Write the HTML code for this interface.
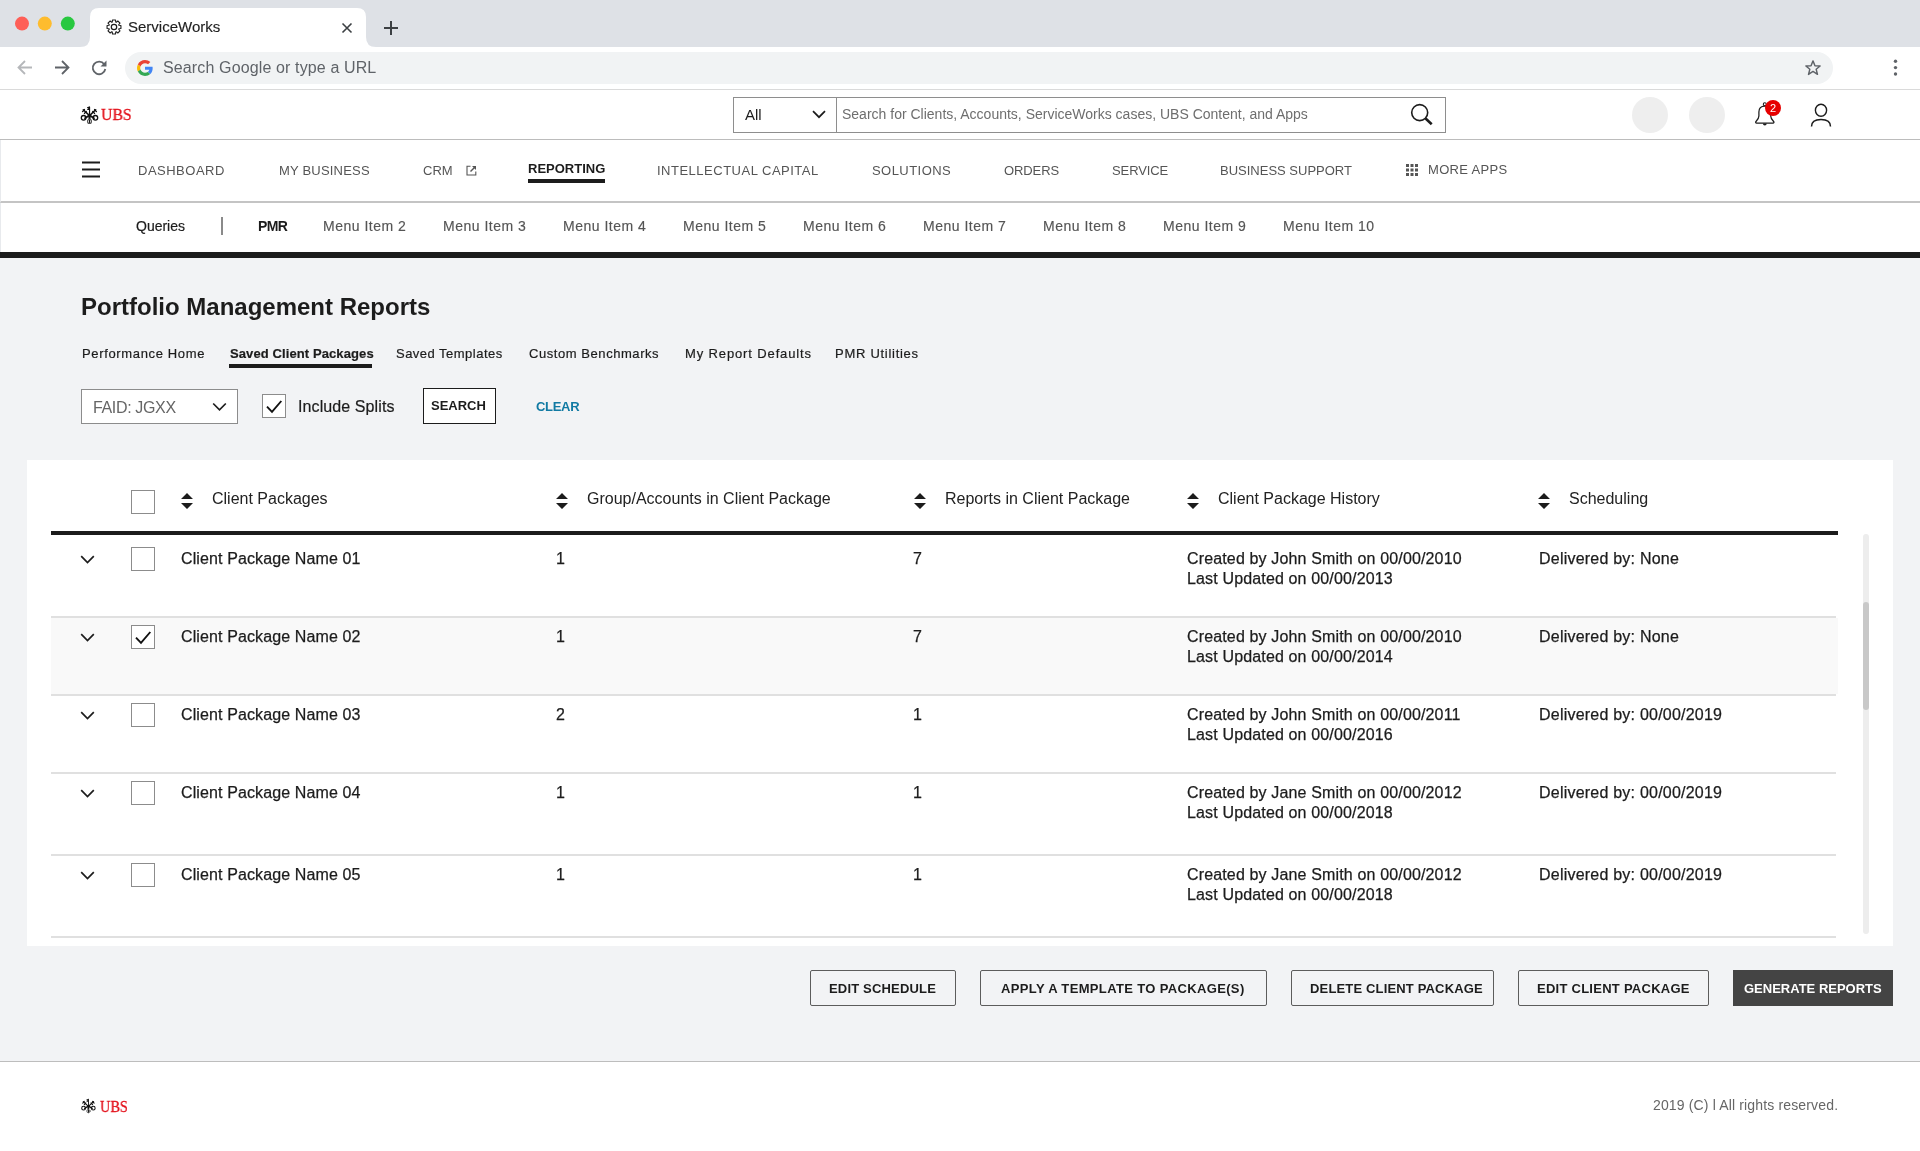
<!DOCTYPE html>
<html><head><meta charset="utf-8">
<style>
*{margin:0;padding:0;box-sizing:border-box}
html,body{width:1920px;height:1151px;overflow:hidden;background:#fff;font-family:"Liberation Sans",sans-serif;color:#1c1c1c;-webkit-font-smoothing:antialiased}
.a{position:absolute;white-space:pre;will-change:transform}
.t13{font-size:13px;line-height:13px}
.t14{font-size:14px;line-height:14px}
.t15{font-size:15px;line-height:15px}
.t16{font-size:16px;line-height:16px}
.b{font-weight:bold}
svg{position:absolute;overflow:visible}
/* chrome */
#tabbar{position:absolute;left:0;top:0;width:1920px;height:47px;background:#dee1e6}
#tab{position:absolute;left:90px;top:8px;width:276px;height:40px;background:#fff;border-radius:9px 9px 0 0}
#addr{position:absolute;left:0;top:47px;width:1920px;height:43px;background:#fff;border-bottom:1px solid #dadada}
#pill{position:absolute;left:125px;top:52px;width:1708px;height:32px;background:#f1f3f4;border-radius:16px}
/* app header */
#apphdr{position:absolute;left:0;top:90px;width:1920px;height:50px;background:#fff;border-bottom:1px solid #bcbcbc}
#nav{position:absolute;left:0;top:140px;width:1920px;height:63px;background:#fff;border-left:1px solid #e8eaed;border-bottom:2px solid #c4c4c4}
#subnav{position:absolute;left:0;top:203px;width:1920px;height:49px;background:#fff;border-left:1px solid #e8eaed}
#blk{position:absolute;left:0;top:252px;width:1920px;height:6px;background:#1c1c1c}
#page{position:absolute;left:0;top:258px;width:1920px;height:803px;background:#f2f3f5}
#footer{position:absolute;left:0;top:1061px;width:1920px;height:90px;background:#fff;border-top:1px solid #bdbdbd}
.nav{color:#555;letter-spacing:0.45px}
.sub{color:#555;letter-spacing:0.5px;-webkit-text-stroke:0.15px #555}
#panel{position:absolute;left:27px;top:460px;width:1866px;height:486px;background:#fff}
.cb{position:absolute;width:24px;height:24px;border:1px solid #8c8c8c;background:#fff}
.rl{position:absolute;height:2px;background:#e0e0e0}
.btn{position:absolute;top:970px;height:36px;border:1.5px solid #5c5c5c;border-radius:2px;background:transparent}
.tab{color:#1c1c1c;letter-spacing:0.65px;-webkit-text-stroke:0.2px #1c1c1c}
.cell{color:#1c1c1c;-webkit-text-stroke:0.25px #1c1c1c}
.bt{font-size:13px;line-height:13px;font-weight:bold;letter-spacing:0.35px;color:#1c1c1c}
</style></head><body>

<!-- ============ CHROME ============ -->
<div id="tabbar"></div>
<svg style="left:0;top:0" width="1920" height="48">
  <circle cx="22" cy="23.6" r="7" fill="#fe5f57"/>
  <circle cx="44.8" cy="23.6" r="7" fill="#febc2e"/>
  <circle cx="67.8" cy="23.6" r="7" fill="#28c840"/>
  <path d="M80 47 Q90 47 90 37 L90 17 Q90 8 99 8 L357 8 Q366 8 366 17 L366 37 Q366 47 376 47 Z" fill="#fff"/>
</svg>
<!-- gear -->
<svg style="left:106px;top:19px" width="16" height="16" viewBox="0 0 16 16"><path d="M12.90 6.27 L14.93 6.45 L14.93 9.55 L12.90 9.73 L12.69 10.24 L14.00 11.80 L11.80 14.00 L10.24 12.69 L9.73 12.90 L9.55 14.93 L6.45 14.93 L6.27 12.90 L5.76 12.69 L4.20 14.00 L2.00 11.80 L3.31 10.24 L3.10 9.73 L1.07 9.55 L1.07 6.45 L3.10 6.27 L3.31 5.76 L2.00 4.20 L4.20 2.00 L5.76 3.31 L6.27 3.10 L6.45 1.07 L9.55 1.07 L9.73 3.10 L10.24 3.31 L11.80 2.00 L14.00 4.20 L12.69 5.76 Z" fill="none" stroke="#1c1c1c" stroke-width="1.1" stroke-linejoin="round"/><circle cx="8" cy="8" r="2.7" fill="none" stroke="#1c1c1c" stroke-width="1.2"/></svg>
<div class="a t15" style="left:128px;top:19.2px;color:#1f1f1f;-webkit-text-stroke:0.15px #1f1f1f">ServiceWorks</div>
<svg style="left:342px;top:23px" width="10" height="10"><path d="M0.5 0.5 L9.5 9.5 M9.5 0.5 L0.5 9.5" stroke="#3c4043" stroke-width="1.6"/></svg>
<svg style="left:384px;top:21px" width="14" height="14"><path d="M7 0 V14 M0 7 H14" stroke="#3c4043" stroke-width="2"/></svg>

<div id="addr"></div>
<div id="pill"></div>
<svg style="left:17px;top:60px" width="16" height="16"><path d="M15 7.5 H2 M8 1 L1.5 7.5 L8 14" stroke="#b5b7ba" stroke-width="1.8" fill="none"/></svg>
<svg style="left:54px;top:60px" width="16" height="16"><path d="M1 7.5 H14 M8 1 L14.5 7.5 L8 14" stroke="#5f6368" stroke-width="1.8" fill="none"/></svg>
<svg style="left:90px;top:59px" width="18" height="18"><path d="M14.2 5.2 A6.3 6.3 0 1 0 15.3 10" stroke="#5f6368" stroke-width="1.8" fill="none"/><path d="M16.5 1.5 V7.5 H10.5 Z" fill="#5f6368"/></svg>
<!-- G logo -->
<svg style="left:137px;top:60px" width="16" height="16" viewBox="0 0 48 48">
  <path fill="#EA4335" d="M24 9.5c3.54 0 6.71 1.22 9.21 3.6l6.85-6.85C35.9 2.38 30.47 0 24 0 14.62 0 6.51 5.38 2.56 13.22l7.98 6.19C12.43 13.72 17.74 9.5 24 9.5z"/>
  <path fill="#4285F4" d="M46.98 24.55c0-1.57-.15-3.09-.38-4.55H24v9.02h12.94c-.58 2.96-2.26 5.48-4.78 7.18l7.73 6c4.51-4.18 7.09-10.36 7.09-17.65z"/>
  <path fill="#FBBC05" d="M10.53 28.59c-.48-1.45-.76-2.99-.76-4.59s.27-3.14.76-4.59l-7.98-6.19C.92 16.46 0 20.12 0 24c0 3.88.92 7.54 2.56 10.78l7.97-6.19z"/>
  <path fill="#34A853" d="M24 48c6.48 0 11.93-2.13 15.89-5.81l-7.73-6c-2.15 1.45-4.92 2.3-8.16 2.3-6.26 0-11.57-4.22-13.47-9.91l-7.98 6.19C6.51 42.62 14.62 48 24 48z"/>
</svg>
<div class="a t16" style="left:163px;top:60.3px;color:#5f6368;letter-spacing:0.13px">Search Google or type a URL</div>
<svg style="left:1804px;top:59px" width="18" height="18" viewBox="0 0 24 24"><path d="M12 2.5 L14.6 9 L21.5 9.3 L16.2 13.7 L18 20.5 L12 16.6 L6 20.5 L7.8 13.7 L2.5 9.3 L9.4 9 Z" fill="none" stroke="#5f6368" stroke-width="1.9" stroke-linejoin="round"/></svg>
<svg style="left:1892px;top:58px" width="8" height="20"><circle cx="3.5" cy="3.2" r="1.7" fill="#5f6368"/><circle cx="3.5" cy="9.6" r="1.7" fill="#5f6368"/><circle cx="3.5" cy="16" r="1.7" fill="#5f6368"/></svg>

<!-- ============ APP HEADER ============ -->
<div id="apphdr"></div>
<div id="nav"></div>
<div id="subnav"></div>
<div id="blk"></div>
<div id="page"></div>
<div id="footer"></div>


<!-- UBS logo header -->
<svg style="left:78px;top:103px" width="22" height="23" viewBox="0 0 22 23">
  <g fill="#111" stroke="none">
    <path d="M11 4 L11.5 3 L12.1 4 L12.1 20.5 L11.5 21 L10.9 20.5 Z"/>
    <path d="M11.2 3.6 L9 4.2 L9.2 5.2 L10.2 5.2 L10.2 5.8 L9.2 5.9 L9.3 6.9 L11.2 6.9 Z"/>
    <path d="M11 11 L12 11 L12.8 12.5 L12.5 15.5 L11.5 17 L10.5 15.5 L10.2 12.5 Z"/>
  </g>
  <g stroke="#111" fill="none" stroke-linecap="round">
    <path d="M5.3 6.8 L11.5 12.6" stroke-width="1.5"/>
    <path d="M17.7 6.8 L11.5 12.6" stroke-width="1.5"/>
    <path d="M4.6 8.6 L6.4 6.6 M6.5 10.4 L8.3 8.4" stroke-width="1.4"/>
    <path d="M18.4 8.6 L16.6 6.6 M16.5 10.4 L14.7 8.4" stroke-width="1.4"/>
    <path d="M11 12.5 L7 15.2 M12 12.5 L16 15.2" stroke-width="1.8"/>
    <ellipse cx="5.6" cy="14.8" rx="2.3" ry="2.3" stroke-width="1.3"/>
    <ellipse cx="17.4" cy="14.8" rx="2.3" ry="2.3" stroke-width="1.3"/>
    <ellipse cx="11.5" cy="18.4" rx="2" ry="2" stroke-width="1.1" stroke="#555"/>
  </g>
</svg>
<div class="a" style="left:100.5px;top:103.5px;font-family:'Liberation Serif',serif;font-size:17.5px;line-height:20px;color:#e3101a;-webkit-text-stroke:0.3px #e3101a;letter-spacing:0;transform:scaleX(0.9);transform-origin:0 0">UBS</div>

<!-- global search -->
<div style="position:absolute;left:733px;top:97px;width:713px;height:36px;border:1px solid #8e8e8e;background:#fff"></div>
<div style="position:absolute;left:836px;top:98px;width:1px;height:34px;background:#8e8e8e"></div>
<div class="a t15" style="left:745px;top:107.3px;color:#1c1c1c">All</div>
<svg style="left:812px;top:110px" width="14" height="9"><path d="M1 1.2 L7 7.2 L13 1.2" stroke="#1c1c1c" stroke-width="1.7" fill="none"/></svg>
<div class="a t14" style="left:842px;top:107.2px;color:#6e6e6e">Search for Clients, Accounts, ServiceWorks cases, UBS Content, and Apps</div>
<svg style="left:1410px;top:103px" width="24" height="24"><circle cx="9.7" cy="9.6" r="8" stroke="#1c1c1c" stroke-width="1.6" fill="none"/><path d="M15.6 15.5 L21.7 21.3" stroke="#1c1c1c" stroke-width="2.6"/></svg>

<!-- right icons -->
<div style="position:absolute;left:1632px;top:97px;width:36px;height:36px;border-radius:50%;background:#eeeeee"></div>
<div style="position:absolute;left:1689px;top:97px;width:36px;height:36px;border-radius:50%;background:#eeeeee"></div>
<svg style="left:1754px;top:101px" width="24" height="26" viewBox="0 0 24 26">
  <path d="M10.8 5 C6.5 5 4.9 7.5 4.9 11 L4.9 15 C4.9 17.5 3.5 19 2 20.5 C1.3 21.3 1.6 22 2.6 22 L19 22 C20 22 20.3 21.3 19.6 20.5 C18.1 19 16.7 17.5 16.7 15 L16.7 11 C16.7 7.5 15.1 5 10.8 5 Z" stroke="#1c1c1c" stroke-width="1.25" fill="#fff" stroke-linejoin="round"/>
  <circle cx="10.8" cy="3.2" r="1.5" stroke="#1c1c1c" stroke-width="1.1" fill="none"/>
  <path d="M8.9 22.5 A1.9 1.9 0 0 0 12.7 22.5 Z" fill="#1c1c1c"/>
</svg>
<div style="position:absolute;left:1765px;top:100px;width:16px;height:16px;border-radius:50%;background:#e60000"></div>
<div class="a" style="left:1764.5px;top:101.5px;width:16px;text-align:center;font-size:11px;line-height:13px;color:#fff">2</div>
<svg style="left:1809px;top:102px" width="24" height="26">
  <ellipse cx="12" cy="8.2" rx="5.6" ry="6" stroke="#1c1c1c" stroke-width="1.4" fill="none"/>
  <path d="M2.5 24.5 Q2.5 17.5 12 17.5 Q21.5 17.5 21.5 24.5" stroke="#1c1c1c" stroke-width="1.5" fill="none"/>
</svg>

<!-- ============ NAV ============ -->
<svg style="left:82px;top:161px" width="19" height="18"><path d="M0 1.5 H18 M0 8.5 H18 M0 15.5 H18" stroke="#1c1c1c" stroke-width="2.2"/></svg>
<div class="a t13 nav" style="left:138px;top:164.3px;letter-spacing:0.5px">DASHBOARD</div>
<div class="a t13 nav" style="left:279px;top:164.3px;letter-spacing:0.2px">MY BUSINESS</div>
<div class="a t13 nav" style="left:423px;top:164.3px;letter-spacing:0px">CRM</div>
<svg style="left:466px;top:165px" width="11" height="11"><path d="M4.5 1.2 H1 V10 H9.8 V6.5" stroke="#555" stroke-width="1.1" fill="none"/><path d="M4.5 6.5 L8.5 2.5" stroke="#555" stroke-width="1.4" fill="none"/><path d="M6 1 H10 V5 Z" fill="#555"/></svg>
<div class="a t13 b" style="left:527.5px;top:162.3px;color:#1c1c1c;letter-spacing:0px">REPORTING</div>
<div style="position:absolute;left:528px;top:179px;width:77px;height:4px;background:#1c1c1c"></div>
<div class="a t13 nav" style="left:657px;top:164.3px;letter-spacing:0.5px">INTELLECTUAL CAPITAL</div>
<div class="a t13 nav" style="left:872px;top:164.3px">SOLUTIONS</div>
<div class="a t13 nav" style="left:1003.5px;top:164.3px;letter-spacing:-0.1px">ORDERS</div>
<div class="a t13 nav" style="left:1112px;top:164.3px;letter-spacing:-0.1px">SERVICE</div>
<div class="a t13 nav" style="left:1220px;top:164.3px;letter-spacing:0px">BUSINESS SUPPORT</div>
<svg style="left:1406px;top:164px" width="12" height="12"><g fill="#555">
<rect x="0" y="0" width="3" height="3"/><rect x="4.5" y="0" width="3" height="3"/><rect x="9" y="0" width="3" height="3"/>
<rect x="0" y="4.5" width="3" height="3"/><rect x="4.5" y="4.5" width="3" height="3"/><rect x="9" y="4.5" width="3" height="3"/>
<rect x="0" y="9" width="3" height="3"/><rect x="4.5" y="9" width="3" height="3"/><rect x="9" y="9" width="3" height="3"/></g></svg>
<div class="a t13 nav" style="left:1428px;top:163.3px;letter-spacing:0.33px">MORE APPS</div>

<!-- ============ SUBNAV ============ -->
<div class="a t14" style="left:136px;top:219px;color:#1c1c1c;-webkit-text-stroke:0.2px #1c1c1c">Queries</div>
<div style="position:absolute;left:221px;top:217px;width:2px;height:18px;background:#8a8a8a"></div>
<div class="a t14 b" style="left:258px;top:219px;color:#1c1c1c;letter-spacing:-0.6px">PMR</div>
<div class="a t14 sub" style="left:323px;top:219px">Menu Item 2</div>
<div class="a t14 sub" style="left:443px;top:219px">Menu Item 3</div>
<div class="a t14 sub" style="left:563px;top:219px">Menu Item 4</div>
<div class="a t14 sub" style="left:683px;top:219px">Menu Item 5</div>
<div class="a t14 sub" style="left:803px;top:219px">Menu Item 6</div>
<div class="a t14 sub" style="left:923px;top:219px">Menu Item 7</div>
<div class="a t14 sub" style="left:1043px;top:219px">Menu Item 8</div>
<div class="a t14 sub" style="left:1163px;top:219px">Menu Item 9</div>
<div class="a t14 sub" style="left:1283px;top:219px">Menu Item 10</div>


<!-- ============ PAGE CONTENT ============ -->
<div class="a b" style="left:81px;top:295.1px;font-size:24px;line-height:24px;color:#1c1c1c">Portfolio Management Reports</div>
<div class="a t13 tab" style="left:81.5px;top:347px">Performance Home</div>
<div class="a t13 tab b" style="left:229.5px;top:347px;letter-spacing:0.1px">Saved Client Packages</div>
<div style="position:absolute;left:229px;top:364px;width:143px;height:4px;background:#1c1c1c"></div>
<div class="a t13 tab" style="left:395.5px;top:347px;letter-spacing:0.48px">Saved Templates</div>
<div class="a t13 tab" style="left:529px;top:347px;letter-spacing:0.56px">Custom Benchmarks</div>
<div class="a t13 tab" style="left:684.5px;top:347px;letter-spacing:0.87px">My Report Defaults</div>
<div class="a t13 tab" style="left:835px;top:347px;letter-spacing:0.72px">PMR Utilities</div>

<div style="position:absolute;left:81px;top:389px;width:157px;height:35px;border:1px solid #8c8c8c;background:#fff"></div>
<div class="a t16" style="left:93px;top:400.3px;color:#666;letter-spacing:-0.35px">FAID: JGXX</div>
<svg style="left:212px;top:402px" width="15" height="10"><path d="M1.2 1.5 L7.5 7.8 L13.8 1.5" stroke="#1c1c1c" stroke-width="1.7" fill="none"/></svg>
<div class="cb" style="left:262px;top:394px"></div>
<svg style="left:264px;top:396px" width="20" height="20"><path d="M3 10.6 L8 15.8 L17.3 5" stroke="#111" stroke-width="1.9" fill="none"/></svg>
<div class="a t16" style="left:298px;top:399px;color:#1c1c1c;letter-spacing:0.1px;-webkit-text-stroke:0.2px #1c1c1c">Include Splits</div>
<div style="position:absolute;left:423px;top:388px;width:73px;height:36px;border:1.5px solid #1c1c1c;background:#fff"></div>
<div class="a t13 b" style="left:431px;top:399.2px;color:#1c1c1c;letter-spacing:0px">SEARCH</div>
<div class="a t13 b" style="left:535.5px;top:400px;color:#117aa3;letter-spacing:-0.3px">CLEAR</div>

<div id="panel"></div>
<div class="cb" style="left:131px;top:490px"></div>

<svg style="left:181px;top:493px" width="12" height="16"><path d="M6 0 L12 6 H0 Z M0 10 H12 L6 16 Z" fill="#1c1c1c"/></svg>
<div class="a t16" style="left:212px;top:490.6px;color:#222">Client Packages</div>
<svg style="left:556px;top:493px" width="12" height="16"><path d="M6 0 L12 6 H0 Z M0 10 H12 L6 16 Z" fill="#1c1c1c"/></svg>
<div class="a t16" style="left:587px;top:490.6px;color:#222">Group/Accounts in Client Package</div>
<svg style="left:914px;top:493px" width="12" height="16"><path d="M6 0 L12 6 H0 Z M0 10 H12 L6 16 Z" fill="#1c1c1c"/></svg>
<div class="a t16" style="left:945px;top:490.6px;color:#222">Reports in Client Package</div>
<svg style="left:1187px;top:493px" width="12" height="16"><path d="M6 0 L12 6 H0 Z M0 10 H12 L6 16 Z" fill="#1c1c1c"/></svg>
<div class="a t16" style="left:1218px;top:490.6px;color:#222">Client Package History</div>
<svg style="left:1538px;top:493px" width="12" height="16"><path d="M6 0 L12 6 H0 Z M0 10 H12 L6 16 Z" fill="#1c1c1c"/></svg>
<div class="a t16" style="left:1568.5px;top:490.6px;color:#222">Scheduling</div>
<div style="position:absolute;left:51px;top:531px;width:1787px;height:4px;background:#1c1c1c"></div>
<div style="position:absolute;left:1863px;top:534px;width:6px;height:400px;border-radius:3px;background:#ededed"></div>
<div style="position:absolute;left:1863px;top:602px;width:6px;height:108px;border-radius:3px;background:#c8c8c8"></div>
<div style="position:absolute;left:51px;top:618px;width:1787px;height:76px;background:#f9f9f9"></div>
<svg style="left:80px;top:555px" width="15" height="9"><path d="M1.2 1.2 L7.5 7.5 L13.8 1.2" stroke="#1c1c1c" stroke-width="1.7" fill="none"/></svg>
<div class="cb" style="left:131px;top:547px"></div>
<div class="a t16 cell" style="left:180.6px;top:551.46px;letter-spacing:0.12px">Client Package Name 01</div>
<div class="a t16 cell" style="left:556px;top:551.46px">1</div>
<div class="a t16 cell" style="left:913px;top:551.46px">7</div>
<div class="a t16 cell" style="left:1186.8px;top:551.46px;letter-spacing:0.15px">Created by John Smith on 00/00/2010</div>
<div class="a t16 cell" style="left:1186.8px;top:571.46px;letter-spacing:0.15px">Last Updated on 00/00/2013</div>
<div class="a t16 cell" style="left:1539px;top:551.46px;letter-spacing:0.22px">Delivered by: None</div>
<div class="rl" style="left:51px;top:616px;width:1785px"></div>
<svg style="left:80px;top:633px" width="15" height="9"><path d="M1.2 1.2 L7.5 7.5 L13.8 1.2" stroke="#1c1c1c" stroke-width="1.7" fill="none"/></svg>
<div class="cb" style="left:131px;top:625px"></div>
<svg style="left:133px;top:627px" width="20" height="20"><path d="M3 10.6 L8 15.8 L17.3 5" stroke="#111" stroke-width="1.9" fill="none"/></svg>
<div class="a t16 cell" style="left:180.6px;top:629.46px;letter-spacing:0.12px">Client Package Name 02</div>
<div class="a t16 cell" style="left:556px;top:629.46px">1</div>
<div class="a t16 cell" style="left:913px;top:629.46px">7</div>
<div class="a t16 cell" style="left:1186.8px;top:629.46px;letter-spacing:0.15px">Created by John Smith on 00/00/2010</div>
<div class="a t16 cell" style="left:1186.8px;top:649.46px;letter-spacing:0.15px">Last Updated on 00/00/2014</div>
<div class="a t16 cell" style="left:1539px;top:629.46px;letter-spacing:0.22px">Delivered by: None</div>
<div class="rl" style="left:51px;top:694px;width:1785px"></div>
<svg style="left:80px;top:711px" width="15" height="9"><path d="M1.2 1.2 L7.5 7.5 L13.8 1.2" stroke="#1c1c1c" stroke-width="1.7" fill="none"/></svg>
<div class="cb" style="left:131px;top:703px"></div>
<div class="a t16 cell" style="left:180.6px;top:707.46px;letter-spacing:0.12px">Client Package Name 03</div>
<div class="a t16 cell" style="left:556px;top:707.46px">2</div>
<div class="a t16 cell" style="left:913px;top:707.46px">1</div>
<div class="a t16 cell" style="left:1186.8px;top:707.46px;letter-spacing:0.15px">Created by John Smith on 00/00/2011</div>
<div class="a t16 cell" style="left:1186.8px;top:727.46px;letter-spacing:0.15px">Last Updated on 00/00/2016</div>
<div class="a t16 cell" style="left:1539px;top:707.46px;letter-spacing:0.22px">Delivered by: 00/00/2019</div>
<div class="rl" style="left:51px;top:772px;width:1785px"></div>
<svg style="left:80px;top:789px" width="15" height="9"><path d="M1.2 1.2 L7.5 7.5 L13.8 1.2" stroke="#1c1c1c" stroke-width="1.7" fill="none"/></svg>
<div class="cb" style="left:131px;top:781px"></div>
<div class="a t16 cell" style="left:180.6px;top:785.46px;letter-spacing:0.12px">Client Package Name 04</div>
<div class="a t16 cell" style="left:556px;top:785.46px">1</div>
<div class="a t16 cell" style="left:913px;top:785.46px">1</div>
<div class="a t16 cell" style="left:1186.8px;top:785.46px;letter-spacing:0.15px">Created by Jane Smith on 00/00/2012</div>
<div class="a t16 cell" style="left:1186.8px;top:805.46px;letter-spacing:0.15px">Last Updated on 00/00/2018</div>
<div class="a t16 cell" style="left:1539px;top:785.46px;letter-spacing:0.22px">Delivered by: 00/00/2019</div>
<div class="rl" style="left:51px;top:854px;width:1785px"></div>
<svg style="left:80px;top:871px" width="15" height="9"><path d="M1.2 1.2 L7.5 7.5 L13.8 1.2" stroke="#1c1c1c" stroke-width="1.7" fill="none"/></svg>
<div class="cb" style="left:131px;top:863px"></div>
<div class="a t16 cell" style="left:180.6px;top:867.46px;letter-spacing:0.12px">Client Package Name 05</div>
<div class="a t16 cell" style="left:556px;top:867.46px">1</div>
<div class="a t16 cell" style="left:913px;top:867.46px">1</div>
<div class="a t16 cell" style="left:1186.8px;top:867.46px;letter-spacing:0.15px">Created by Jane Smith on 00/00/2012</div>
<div class="a t16 cell" style="left:1186.8px;top:887.46px;letter-spacing:0.15px">Last Updated on 00/00/2018</div>
<div class="a t16 cell" style="left:1539px;top:867.46px;letter-spacing:0.22px">Delivered by: 00/00/2019</div>
<div class="rl" style="left:51px;top:936px;width:1785px"></div>
<div class="btn" style="left:810px;width:146px"></div>
<div class="a bt" style="left:829px;top:982.3px;letter-spacing:0.18px">EDIT SCHEDULE</div>
<div class="btn" style="left:980px;width:287px"></div>
<div class="a bt" style="left:1001px;top:982.3px">APPLY A TEMPLATE TO PACKAGE(S)</div>
<div class="btn" style="left:1291px;width:203px"></div>
<div class="a bt" style="left:1309.5px;top:982.3px;letter-spacing:0.16px">DELETE CLIENT PACKAGE</div>
<div class="btn" style="left:1518px;width:191px"></div>
<div class="a bt" style="left:1536.5px;top:982.3px;letter-spacing:0.26px">EDIT CLIENT PACKAGE</div>
<div style="position:absolute;left:1733px;top:970px;width:160px;height:36px;background:#444"></div>
<div class="a bt" style="left:1744px;top:982.3px;color:#fff;letter-spacing:0px">GENERATE REPORTS</div>

<svg style="left:79px;top:1095.5px" width="18.04" height="18.86" viewBox="0 0 22 23">
  <g fill="#111" stroke="none">
    <path d="M11 4 L11.5 3 L12.1 4 L12.1 20.5 L11.5 21 L10.9 20.5 Z"/>
    <path d="M11.2 3.6 L9 4.2 L9.2 5.2 L10.2 5.2 L10.2 5.8 L9.2 5.9 L9.3 6.9 L11.2 6.9 Z"/>
    <path d="M11 11 L12 11 L12.8 12.5 L12.5 15.5 L11.5 17 L10.5 15.5 L10.2 12.5 Z"/>
  </g>
  <g stroke="#111" fill="none" stroke-linecap="round">
    <path d="M5.3 6.8 L11.5 12.6" stroke-width="1.5"/>
    <path d="M17.7 6.8 L11.5 12.6" stroke-width="1.5"/>
    <path d="M4.6 8.6 L6.4 6.6 M6.5 10.4 L8.3 8.4" stroke-width="1.4"/>
    <path d="M18.4 8.6 L16.6 6.6 M16.5 10.4 L14.7 8.4" stroke-width="1.4"/>
    <path d="M11 12.5 L7 15.2 M12 12.5 L16 15.2" stroke-width="1.8"/>
    <ellipse cx="5.6" cy="14.8" rx="2.3" ry="2.3" stroke-width="1.3"/>
    <ellipse cx="17.4" cy="14.8" rx="2.3" ry="2.3" stroke-width="1.3"/>
    <ellipse cx="11.5" cy="18.4" rx="2" ry="2" stroke-width="1.1" stroke="#555"/>
  </g>
</svg>
<div class="a" style="left:99.5px;top:1095.5px;font-family:'Liberation Serif',serif;font-size:17.5px;line-height:20px;color:#e3101a;-webkit-text-stroke:0.3px #e3101a;letter-spacing:0;transform:scaleX(0.82);transform-origin:0 0">UBS</div>
<div class="a t14" style="left:1653px;top:1098.4px;color:#666;letter-spacing:0.15px">2019 (C) l All rights reserved.</div>

</body></html>
